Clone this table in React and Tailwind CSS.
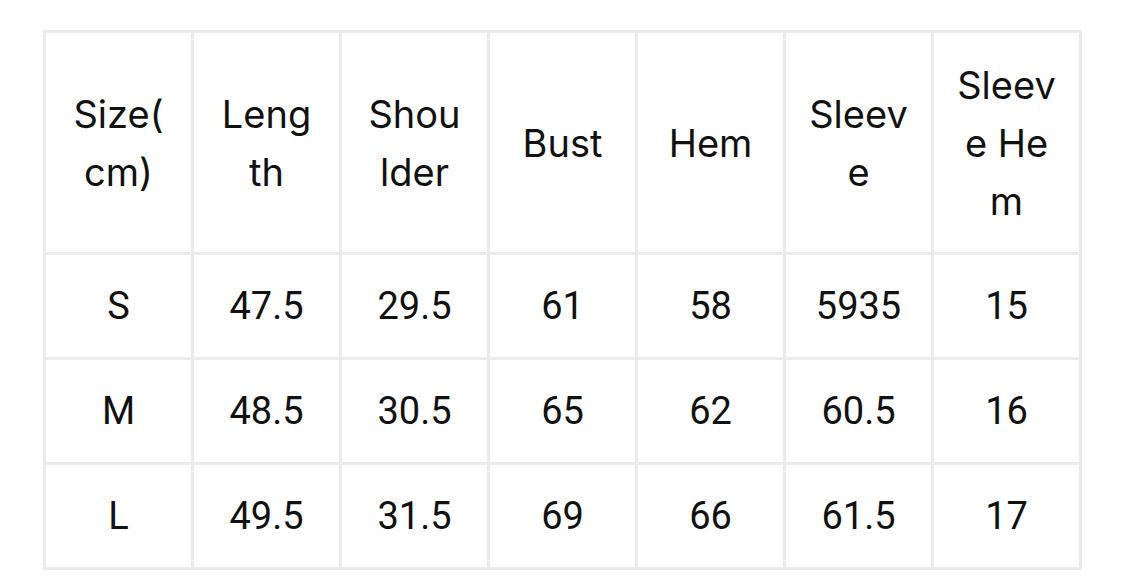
const headers = [
  ["Size(", "cm)"],
  ["Leng", "th"],
  ["Shou", "lder"],
  ["Bust"],
  ["Hem"],
  ["Sleev", "e"],
  ["Sleev", "e He", "m"],
];

const rows = [
  ["S", "47.5", "29.5", "61", "58", "5935", "15"],
  ["M", "48.5", "30.5", "65", "62", "60.5", "16"],
  ["L", "49.5", "31.5", "69", "66", "61.5", "17"],
];

export default function App() {
  return (
    <div className="w-[1125px] h-[580px] bg-white pt-[30px] pl-[43px]">
      <table className="table-fixed border-collapse w-[1039px] text-[#111]">
        <thead>
          <tr className="h-[222px]">
            {headers.map((lines, i) => (
              <th
                key={i}
                className="border-[3px] border-[#ebebeb] text-center align-middle font-normal text-[38px] leading-[58px] p-0"
                style={{ fontFamily: "Inter, 'Noto Sans', sans-serif" }}
              >
                {lines.map((l, j) => (
                  <div key={j} className="whitespace-pre">{l}</div>
                ))}
              </th>
            ))}
          </tr>
        </thead>
        <tbody>
          {rows.map((r, i) => (
            <tr key={i} className="h-[105px]">
              {r.map((c, j) => (
                <td
                  key={j}
                  className="border-[3px] border-[#ebebeb] text-center align-middle text-[38px] p-0"
                  style={{ fontFamily: "Roboto, 'Liberation Sans', sans-serif" }}
                >
                  {c}
                </td>
              ))}
            </tr>
          ))}
        </tbody>
      </table>
    </div>
  );
}
